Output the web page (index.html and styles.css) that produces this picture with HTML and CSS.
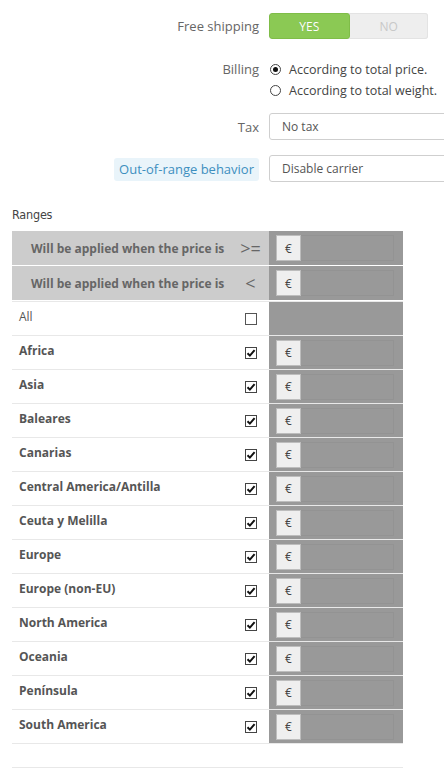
FILE: index.html
```html
<!DOCTYPE html>
<html>
<head>
<meta charset="utf-8">
<link rel="stylesheet" href="styles.css">
</head>
<body>
<div class="form">
  <div class="form-row row-switch">
    <div class="label">Free shipping</div>
    <div class="switch"><span class="sw-yes">YES</span><span class="sw-no">NO</span></div>
  </div>
  <div class="form-row row-billing">
    <div class="label">Billing</div>
    <div class="radios">
      <div class="radio"><span class="rdot on"></span>According to total price.</div>
      <div class="radio"><span class="rdot"></span>According to total weight.</div>
    </div>
  </div>
  <div class="form-row row-tax">
    <div class="label">Tax</div>
    <div class="select">No tax</div>
  </div>
  <div class="form-row row-oor">
    <div class="label"><span class="hint">Out-of-range behavior</span></div>
    <div class="select">Disable carrier</div>
  </div>
</div>

<h3 class="ranges">Ranges</h3>

<div class="table">
  <div class="trow head">
    <div class="c-label">Will be applied when the price is</div>
    <div class="c-op">&gt;=</div>
    <div class="c-val"><span class="addon">€</span><span class="inp"></span></div>
  </div>
  <div class="trow head">
    <div class="c-label">Will be applied when the price is</div>
    <div class="c-op">&lt;</div>
    <div class="c-val"><span class="addon">€</span><span class="inp"></span></div>
  </div>
  <div class="trow all">
    <div class="c-label">All</div>
    <div class="c-op"><span class="cb"></span></div>
    <div class="c-val"></div>
  </div>
  <div class="trow zone">
    <div class="c-label">Africa</div>
    <div class="c-op"><span class="cb checked"><svg viewBox="0 0 12 12" width="12" height="12"><path d="M2.5 6.2 L4.9 8.6 L9.6 3.2" fill="none" stroke="#111" stroke-width="2"/></svg></span></div>
    <div class="c-val"><span class="addon">€</span><span class="inp"></span></div>
  </div>
  <div class="trow zone">
    <div class="c-label">Asia</div>
    <div class="c-op"><span class="cb checked"><svg viewBox="0 0 12 12" width="12" height="12"><path d="M2.5 6.2 L4.9 8.6 L9.6 3.2" fill="none" stroke="#111" stroke-width="2"/></svg></span></div>
    <div class="c-val"><span class="addon">€</span><span class="inp"></span></div>
  </div>
  <div class="trow zone">
    <div class="c-label">Baleares</div>
    <div class="c-op"><span class="cb checked"><svg viewBox="0 0 12 12" width="12" height="12"><path d="M2.5 6.2 L4.9 8.6 L9.6 3.2" fill="none" stroke="#111" stroke-width="2"/></svg></span></div>
    <div class="c-val"><span class="addon">€</span><span class="inp"></span></div>
  </div>
  <div class="trow zone">
    <div class="c-label">Canarias</div>
    <div class="c-op"><span class="cb checked"><svg viewBox="0 0 12 12" width="12" height="12"><path d="M2.5 6.2 L4.9 8.6 L9.6 3.2" fill="none" stroke="#111" stroke-width="2"/></svg></span></div>
    <div class="c-val"><span class="addon">€</span><span class="inp"></span></div>
  </div>
  <div class="trow zone">
    <div class="c-label">Central America/Antilla</div>
    <div class="c-op"><span class="cb checked"><svg viewBox="0 0 12 12" width="12" height="12"><path d="M2.5 6.2 L4.9 8.6 L9.6 3.2" fill="none" stroke="#111" stroke-width="2"/></svg></span></div>
    <div class="c-val"><span class="addon">€</span><span class="inp"></span></div>
  </div>
  <div class="trow zone">
    <div class="c-label">Ceuta y Melilla</div>
    <div class="c-op"><span class="cb checked"><svg viewBox="0 0 12 12" width="12" height="12"><path d="M2.5 6.2 L4.9 8.6 L9.6 3.2" fill="none" stroke="#111" stroke-width="2"/></svg></span></div>
    <div class="c-val"><span class="addon">€</span><span class="inp"></span></div>
  </div>
  <div class="trow zone">
    <div class="c-label">Europe</div>
    <div class="c-op"><span class="cb checked"><svg viewBox="0 0 12 12" width="12" height="12"><path d="M2.5 6.2 L4.9 8.6 L9.6 3.2" fill="none" stroke="#111" stroke-width="2"/></svg></span></div>
    <div class="c-val"><span class="addon">€</span><span class="inp"></span></div>
  </div>
  <div class="trow zone">
    <div class="c-label">Europe (non-EU)</div>
    <div class="c-op"><span class="cb checked"><svg viewBox="0 0 12 12" width="12" height="12"><path d="M2.5 6.2 L4.9 8.6 L9.6 3.2" fill="none" stroke="#111" stroke-width="2"/></svg></span></div>
    <div class="c-val"><span class="addon">€</span><span class="inp"></span></div>
  </div>
  <div class="trow zone">
    <div class="c-label">North America</div>
    <div class="c-op"><span class="cb checked"><svg viewBox="0 0 12 12" width="12" height="12"><path d="M2.5 6.2 L4.9 8.6 L9.6 3.2" fill="none" stroke="#111" stroke-width="2"/></svg></span></div>
    <div class="c-val"><span class="addon">€</span><span class="inp"></span></div>
  </div>
  <div class="trow zone">
    <div class="c-label">Oceania</div>
    <div class="c-op"><span class="cb checked"><svg viewBox="0 0 12 12" width="12" height="12"><path d="M2.5 6.2 L4.9 8.6 L9.6 3.2" fill="none" stroke="#111" stroke-width="2"/></svg></span></div>
    <div class="c-val"><span class="addon">€</span><span class="inp"></span></div>
  </div>
  <div class="trow zone">
    <div class="c-label">Península</div>
    <div class="c-op"><span class="cb checked"><svg viewBox="0 0 12 12" width="12" height="12"><path d="M2.5 6.2 L4.9 8.6 L9.6 3.2" fill="none" stroke="#111" stroke-width="2"/></svg></span></div>
    <div class="c-val"><span class="addon">€</span><span class="inp"></span></div>
  </div>
  <div class="trow zone">
    <div class="c-label">South America</div>
    <div class="c-op"><span class="cb checked"><svg viewBox="0 0 12 12" width="12" height="12"><path d="M2.5 6.2 L4.9 8.6 L9.6 3.2" fill="none" stroke="#111" stroke-width="2"/></svg></span></div>
    <div class="c-val"><span class="addon">€</span><span class="inp"></span></div>
  </div>
  <div class="trow foot"></div>
</div>
</body>
</html>
```

FILE: styles.css
```css
html, body {
  margin: 0;
  padding: 0;
  overflow: hidden;
  background: #fff;
}
body {
  font-family: "Open Sans", "Liberation Sans", sans-serif;
  font-size: 13px;
  color: #555;
  padding-top: 13px;
  width: 444px;
}
.form {
  overflow: hidden;
}
.form-row {
  display: grid;
  grid-template-columns: 259px 1fr;
  column-gap: 10px;
  align-items: center;
}
.label {
  text-align: right;
  color: #666;
  font-size: 13px;
  line-height: 18px;
}
.row-switch { height: 26px; }
.switch {
  display: flex;
  width: 159px;
  height: 26px;
  border-radius: 3px;
  overflow: hidden;
  background: #eee;
  box-shadow: inset 0 0 0 1px #e3e3e3;
}
.switch span {
  flex: 1;
  display: flex;
  align-items: center;
  justify-content: center;
  font-size: 12px;
}
.sw-yes {
  background: #8bc954;
  color: #fff;
  border: 1px solid #7fbd48;
  border-radius: 3px;
  text-shadow: 0 0 1px rgba(0,0,0,0.1);
}
.sw-no { color: #c8c8c8; }

.row-billing { margin-top: 20px; align-items: start; }
.row-billing .label { line-height: 21px; }
.radio {
  display: flex;
  align-items: center;
  height: 21px;
  color: #444;
  font-size: 12.5px;
}
.rdot {
  width: 11px;
  height: 11px;
  border: 1px solid #444;
  border-radius: 50%;
  margin-left: 1px;
  margin-right: 8px;
  box-sizing: border-box;
  position: relative;
  background: #fff;
}
.rdot.on::after {
  content: "";
  position: absolute;
  left: 2px;
  top: 2px;
  width: 5px;
  height: 5px;
  border-radius: 50%;
  background: #111;
}
.row-tax { margin-top: 12px; }
.row-oor { margin-top: 15px; }
.select {
  width: 230px;
  height: 27px;
  box-sizing: border-box;
  border: 1px solid #cfcfcf;
  border-radius: 3px;
  padding-left: 12px;
  display: flex;
  align-items: center;
  font-size: 12px;
  color: #555;
  background: #fff;
}
.hint {
  background: #e9f4fa;
  color: #3d8fbf;
  padding: 2px 5px 3px;
  border-radius: 3px;
  font-size: 13px;
}

.ranges {
  margin: 25px 0 0 12px;
  font-family: "DejaVu Sans", sans-serif;
  font-stretch: condensed;
  font-weight: normal;
  font-size: 12.5px;
  color: #444;
  height: 24px;
  line-height: 16px;
  letter-spacing: -0.2px;
}

.table {
  margin-left: 12px;
  width: 391px;
}
.trow {
  display: grid;
  grid-template-columns: 224px 33px 134px;
  height: 34px;
  box-sizing: border-box;
}
.trow.head {
  border-bottom: 1px solid #fff;
  height: 35px;
}
.trow.head .c-label {
  background: #ccc;
  font-weight: bold;
  font-size: 12px;
  color: #666;
  padding-left: 19px;
  display: flex;
  align-items: center;
}
.trow.head .c-op {
  background: #ccc;
  display: flex;
  align-items: center;
  justify-content: center;
  font-size: 18px;
  font-weight: 400;
  color: #666;
  padding-right: 4px;
}
.c-val {
  background: #999;
  display: flex;
  align-items: center;
  padding-left: 7px;
}
.addon {
  width: 25px;
  height: 26px;
  box-sizing: border-box;
  background: #efefef;
  border: 1px solid #bdbdbd;
  display: flex;
  align-items: center;
  justify-content: center;
  font-size: 12px;
  color: #444;
}
.inp {
  width: 93px;
  height: 26px;
  box-sizing: border-box;
  border: 1px solid #939393;
  border-left: none;
}
.trow.all, .trow.zone {
  border-top: 1px solid #e8e8e8;
}
.trow.all .c-label, .trow.zone .c-label {
  padding: 8px 0 0 7px;
  font-size: 12px;
  line-height: 14px;
  color: #555;
}
.trow.zone .c-label { font-weight: bold; }
.trow.all .c-op, .trow.zone .c-op {
  display: flex;
  align-items: center;
  justify-content: center;
  padding-right: 4px;
}
.cb {
  width: 12px;
  height: 12px;
  box-sizing: border-box;
  border: 1px solid #555;
  background: #fff;
  display: block;
}
.cb.checked { border-color: #444; }
.cb svg { display: block; margin: -1px 0 0 -1px; }
.trow.foot {
  height: 25px;
  border-top: 1px solid #e8e8e8;
  border-bottom: 1px solid #e8e8e8;
  grid-template-columns: 1fr;
}
```
